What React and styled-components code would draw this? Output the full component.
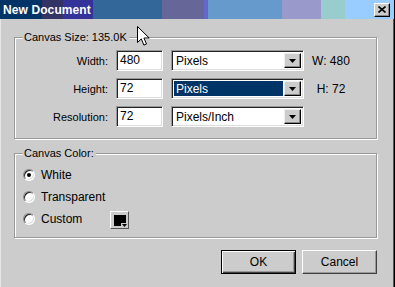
import React from "react";
import styled, { createGlobalStyle } from "styled-components";

const GlobalStyle = createGlobalStyle`
  html, body {
    margin: 0;
    padding: 0;
    background: #cccccc;
  }
  body {
    font-family: "Liberation Sans", Arial, sans-serif;
    font-size: 11px;
    color: #000;
  }
`;

const sizeRows = [
  { label: "Width:", value: "480", unit: "Pixels", info: "W: 480" },
  { label: "Height:", value: "72", unit: "Pixels", info: "H: 72", active: true },
  { label: "Resolution:", value: "72", unit: "Pixels/Inch" },
];

const colorOptions = [
  { label: "White", checked: true },
  { label: "Transparent" },
  { label: "Custom", swatch: true },
];

const Arrow = () => (
  <svg width="7" height="4" viewBox="0 0 7 4">
    <path d="M0 0h7L3.5 4z" fill="#000" />
  </svg>
);

const Cursor = () => (
  <svg width="13" height="21" viewBox="0 0 13 21">
    <path
      d="M0.5 0.5v16l3.8-3.6 2.6 6.2 2.6-1.1-2.6-6h5.3z"
      fill="#fff"
      stroke="#000"
      strokeWidth="1"
      strokeLinejoin="miter"
    />
  </svg>
);

const App = () => {
  return (
    <>
      <GlobalStyle />
      <Window>
        <TitleBar>
          <Title>New Document</Title>
          <CloseButton>
            <svg width="8" height="7" viewBox="0 0 8 7">
              <path d="M0.5 0.5l7 6M7.5 0.5l-7 6" stroke="#000" strokeWidth="1.6" />
            </svg>
          </CloseButton>
        </TitleBar>

        <Body>
          <Group>
            <Legend>Canvas Size: 135.0K</Legend>
            <SizeGrid>
              {sizeRows.map((row) => (
                <React.Fragment key={row.label}>
                  <FieldLabel>{row.label}</FieldLabel>
                  <TextBox>{row.value}</TextBox>
                  <Select>
                    <SelectValue $active={row.active}>{row.unit}</SelectValue>
                    <DropButton>
                      <Arrow />
                    </DropButton>
                  </Select>
                  <Info>{row.info}</Info>
                </React.Fragment>
              ))}
            </SizeGrid>
          </Group>

          <Group $second>
            <Legend>Canvas Color:</Legend>
            <RadioList>
              {colorOptions.map((opt) => (
                <RadioRow key={opt.label}>
                  <Radio $checked={opt.checked} />
                  <RadioLabel>{opt.label}</RadioLabel>
                  {opt.swatch && (
                    <Swatch>
                      <SwatchColor />
                      <SwatchArrow>
                        <svg width="5" height="3" viewBox="0 0 5 3">
                          <path d="M0 0h5L2.5 3z" fill="#000" />
                        </svg>
                      </SwatchArrow>
                    </Swatch>
                  )}
                </RadioRow>
              ))}
            </RadioList>
          </Group>

          <ButtonRow>
            <PushButton $default>OK</PushButton>
            <PushButton>Cancel</PushButton>
          </ButtonRow>
        </Body>

        <Pointer>
          <Cursor />
        </Pointer>
      </Window>
    </>
  );
};

const Window = styled.div`
  position: relative;
  width: 395px;
  height: 287px;
  box-sizing: border-box;
  background: #cccccc;
  border-right: 1px solid #000;
  box-shadow: inset -1px 0 0 #555, inset 1px 0 0 #e6e6e6;
  overflow: hidden;
`;

const TitleBar = styled.div`
  height: 19px;
  display: flex;
  align-items: center;
  justify-content: space-between;
  padding: 0 4px 0 3px;
  background: linear-gradient(
    to right,
    #003366 0 42px,
    #333366 42px 63px,
    #333399 63px 93px,
    #336699 93px 162px,
    #666699 162px 204px,
    #6666cc 204px 208px,
    #6699cc 208px 282px,
    #9999cc 282px 321px,
    #99cccc 321px 345px,
    #99ccff 345px
  );
`;

const Title = styled.span`
  color: #fff;
  font-weight: bold;
  font-size: 12px;
  letter-spacing: 0.1px;
`;

const CloseButton = styled.div`
  width: 16px;
  height: 14px;
  box-sizing: border-box;
  display: flex;
  align-items: center;
  justify-content: center;
  background: #cccccc;
  border: 1px solid;
  border-color: #fff #000 #000 #fff;
  box-shadow: inset -1px -1px 0 #888;
`;

const Body = styled.div`
  padding: 11px 17px 0 14px;
`;

const Group = styled.fieldset`
  margin: ${(p) => (p.$second ? "7px" : "0")} 0 0;
  padding: 0 0 ${(p) => (p.$second ? "7px" : "11px")} 8px;
  border: 1px solid #999;
  box-shadow: 1px 1px 0 #fff, inset 1px 1px 0 #fff;
  min-width: 0;
`;

const Legend = styled.legend`
  padding: 0 2px 0 1px;
  line-height: 14px;
  background: #cccccc;
`;

const SizeGrid = styled.div`
  display: grid;
  grid-template-columns: 85px 47px 133px 46px;
  column-gap: 8px;
  row-gap: 7px;
  align-items: center;
  padding-top: 6px;
  & > :nth-child(4n) {
    margin-left: -8px;
  }
`;

const FieldLabel = styled.span`
  text-align: right;
`;

const sunken = `
  box-sizing: border-box;
  height: 21px;
  background: #fff;
  border: 1px solid;
  border-color: #999 #fff #fff #999;
  box-shadow: inset 1px 1px 0 #222, inset -1px -1px 0 #ddd;
`;

const TextBox = styled.div`
  ${sunken}
  padding: 3px 3px 0;
  line-height: 13px;
  font-size: 12px;
`;

const Select = styled.div`
  ${sunken}
  display: flex;
  align-items: stretch;
  padding: 2px;
  gap: 1px;
`;

const SelectValue = styled.div`
  flex: 1;
  padding: 1px 2px 0;
  line-height: 14px;
  font-size: 12px;
  background: ${(p) => (p.$active ? "#003366" : "#fff")};
  color: ${(p) => (p.$active ? "#fff" : "#000")};
`;

const DropButton = styled.div`
  width: 17px;
  box-sizing: border-box;
  display: flex;
  align-items: center;
  justify-content: center;
  background: #cccccc;
  border: 1px solid;
  border-color: #eee #000 #000 #eee;
  box-shadow: inset -1px -1px 0 #888;
`;

const Info = styled.span`
  text-align: center;
  font-size: 12px;
`;

const RadioList = styled.div`
  display: flex;
  flex-direction: column;
  padding-top: 4px;
`;

const RadioRow = styled.div`
  height: 22px;
  display: flex;
  align-items: center;
`;

const Radio = styled.span`
  position: relative;
  width: 12px;
  height: 12px;
  box-sizing: border-box;
  border-radius: 50%;
  background: #fff;
  border: 1px solid;
  border-color: #888 #fff #fff #888;
  box-shadow: inset 1px 1px 0 #222, inset -1px -1px 0 #ddd;
  &::after {
    content: "";
    display: ${(p) => (p.$checked ? "block" : "none")};
    position: absolute;
    left: 3px;
    top: 3px;
    width: 4px;
    height: 4px;
    border-radius: 50%;
    background: #000;
  }
`;

const RadioLabel = styled.span`
  margin-left: 6px;
  width: 69px;
  font-size: 12px;
`;

const Swatch = styled.div`
  position: relative;
  width: 19px;
  height: 18px;
  box-sizing: border-box;
  padding: 3px;
  background: #cccccc;
  border: 1px solid;
  border-color: #fff #555 #555 #fff;
  margin-top: 2px;
`;

const SwatchColor = styled.div`
  width: 12px;
  height: 11px;
  background: #000;
`;

const SwatchArrow = styled.span`
  position: absolute;
  right: 0;
  bottom: 0;
  display: flex;
  padding: 1px;
  background: #cccccc;
`;

const ButtonRow = styled.div`
  display: flex;
  justify-content: flex-end;
  gap: 6px;
  margin-top: 12px;
`;

const PushButton = styled.div`
  width: 75px;
  height: 24px;
  box-sizing: border-box;
  display: flex;
  align-items: center;
  justify-content: center;
  font-size: 12px;
  background: #cccccc;
  border: 1px solid;
  border-color: ${(p) => (p.$default ? "#000" : "#fff #404040 #404040 #fff")};
  box-shadow: ${(p) =>
    p.$default
      ? "inset 1px 1px 0 #fff, inset -1px -1px 0 #404040, inset -2px -2px 0 #999"
      : "inset -1px -1px 0 #999"};
`;

const Pointer = styled.div`
  position: absolute;
  left: 137px;
  top: 26px;
  line-height: 0;
  pointer-events: none;
`;

export default App;
